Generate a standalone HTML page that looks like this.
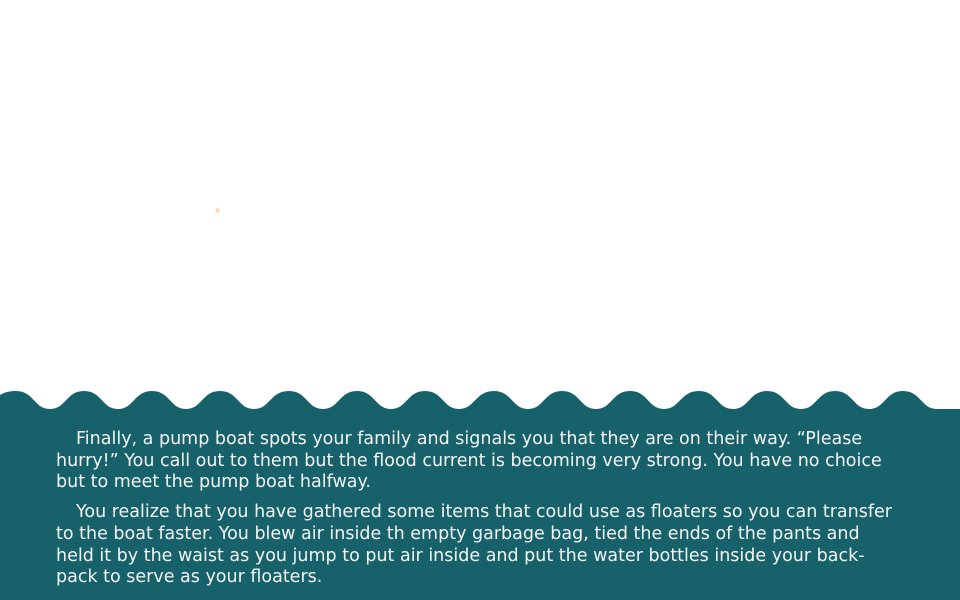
<!DOCTYPE html>
<html><head><style>
html,body{margin:0;padding:0;width:960px;height:600px;overflow:hidden;background:#fff}
svg{position:absolute;left:0;top:0}
.t{position:absolute;left:56px;top:429px;width:880px;color:#f4f4f4;font-family:"DejaVu Sans","Liberation Sans",sans-serif;font-size:17.5px;line-height:21.7px;white-space:nowrap}
.t p{margin:0 0 8px 0}
.i{display:inline-block;width:20px}
.d{position:absolute;left:215px;top:207px;width:5px;height:7px;background:#fbd9bd;clip-path:polygon(50% 0,100% 50%,50% 100%,0 50%)}
</style></head><body>
<div class="d"></div>
<svg width="960" height="600" viewBox="0 0 960 600">
<path fill="#17616a" d="M0 600 L0 395 C5 392 10 391 16 391 C34 391 34 409 50 409 C66 409 66 391 84 391 C102 391 102 409 118 409 C134 409 134 391 152 391 C170 391 170 409 186 409 C202 409 202 391 220 391 C238 391 238 409 254 409 C270 409 270 391 289 391 C307 391 307 409 323 409 C339 409 339 391 357 391 C375 391 375 409 391 409 C407 409 407 391 425 391 C443 391 443 409 459 409 C475 409 475 391 494 391 C512 391 512 409 528 409 C544 409 544 391 562 391 C580 391 580 409 596 409 C612 409 612 391 630 391 C648 391 648 409 664 409 C680 409 680 391 699 391 C717 391 717 409 733 409 C749 409 749 391 767 391 C785 391 785 409 801 409 C817 409 817 391 835 391 C853 391 853 409 869 409 C885 409 885 391 903 391 C921 391 921 409 937 409 C950 409 955 409 960 409 L960 600 Z"/>
</svg>
<div class="t">
<p><span class="i"></span>Finally, a pump boat spots your family and signals you that they are on their way. “Please<br>hurry!” You call out to them but the flood current is becoming very strong. You have no choice<br>but to meet the pump boat halfway.</p>
<p><span class="i"></span>You realize that you have gathered some items that could use as floaters so you can transfer<br>to the boat faster. You blew air inside th empty garbage bag, tied the ends of the pants and<br>held it by the waist as you jump to put air inside and put the water bottles inside your back-<br>pack to serve as your floaters.</p>
</div>
</body></html>
